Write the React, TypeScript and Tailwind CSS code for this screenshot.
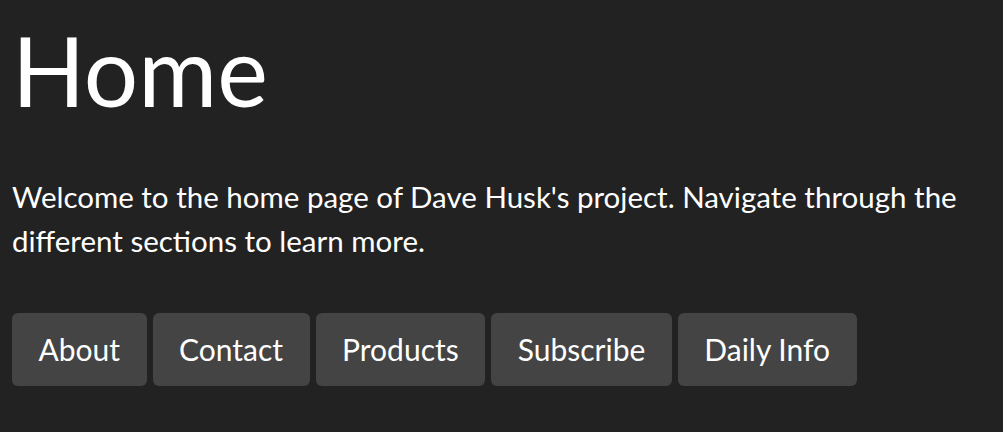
const links = ["About", "Contact", "Products", "Subscribe", "Daily Info"];

const NavButton = ({ label }: { label: string }) => {
  return (
    <a
      href="#"
      className="block rounded-[6px] bg-[#444444] px-[26.5px] py-[17px] text-[30px] leading-[39px] text-white"
    >
      {label}
    </a>
  );
};

export default function App() {
  return (
    <div className="min-h-[432px] w-full bg-[#222222] pl-[12px] pt-[10px] text-white font-['Lato',sans-serif]">
      <h1 className="text-[96px] leading-[120px] font-normal">Home</h1>
      <p className="mt-[45px] max-w-[970px] text-[29.5px] leading-[44px]">
        Welcome to the home page of Dave Husk's project. Navigate through the different sections to learn more.
      </p>
      <nav className="mt-[50px] flex gap-[6px]">
        {links.map((l) => (
          <NavButton key={l} label={l} />
        ))}
      </nav>
    </div>
  );
}
